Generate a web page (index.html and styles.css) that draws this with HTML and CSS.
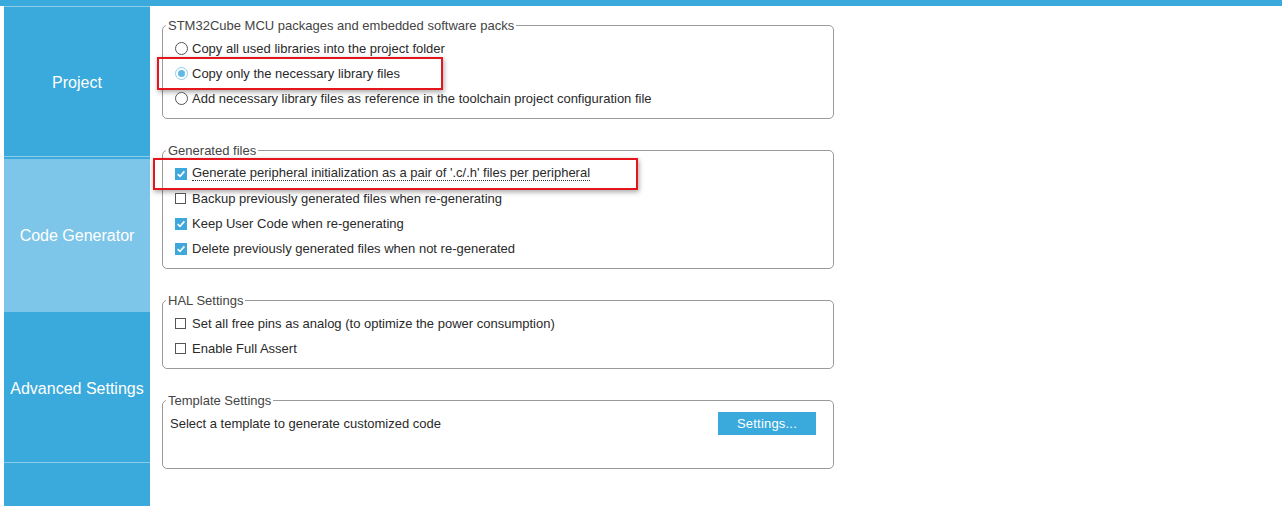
FILE: index.html
```html
<!DOCTYPE html>
<html>
<head>
<meta charset="utf-8">
<link rel="stylesheet" href="styles.css">
</head>
<body>
<div class="topbar"></div>
<div class="app">
  <nav class="sidebar">
    <div class="nav-item nav-project">Project</div>
    <div class="nav-item nav-code active">Code Generator</div>
    <div class="nav-item nav-adv">Advanced Settings</div>
    <div class="nav-rest"></div>
  </nav>
  <main class="main">
    <fieldset class="group">
      <legend>STM32Cube MCU packages and embedded software packs</legend>
      <div class="row"><span class="radio"></span><span class="label">Copy all used libraries into the project folder</span></div>
      <div class="row"><span class="mark mark-1"></span><span class="radio on"></span><span class="label">Copy only the necessary library files</span></div>
      <div class="row"><span class="radio"></span><span class="label">Add necessary library files as reference in the toolchain project configuration file</span></div>
    </fieldset>
    <fieldset class="group">
      <legend>Generated files</legend>
      <div class="row"><span class="mark mark-2"></span><span class="check on"><svg viewBox="0 0 12 12" width="12" height="12"><path d="M2.6 6.2 L5 8.4 L9.4 3.4" fill="none" stroke="#fff" stroke-width="1.6"/></svg></span><span class="label cb focus">Generate peripheral initialization as a pair of '.c/.h' files per peripheral</span></div>
      <div class="row"><span class="check"></span><span class="label cb">Backup previously generated files when re-generating</span></div>
      <div class="row"><span class="check on"><svg viewBox="0 0 12 12" width="12" height="12"><path d="M2.6 6.2 L5 8.4 L9.4 3.4" fill="none" stroke="#fff" stroke-width="1.6"/></svg></span><span class="label cb">Keep User Code when re-generating</span></div>
      <div class="row"><span class="check on"><svg viewBox="0 0 12 12" width="12" height="12"><path d="M2.6 6.2 L5 8.4 L9.4 3.4" fill="none" stroke="#fff" stroke-width="1.6"/></svg></span><span class="label cb">Delete previously generated files when not re-generated</span></div>
    </fieldset>
    <fieldset class="group">
      <legend>HAL Settings</legend>
      <div class="row"><span class="check"></span><span class="label cb">Set all free pins as analog (to optimize the power consumption)</span></div>
      <div class="row"><span class="check"></span><span class="label cb">Enable Full Assert</span></div>
    </fieldset>
    <fieldset class="group group-template">
      <legend>Template Settings</legend>
      <div class="row row-template"><span class="label">Select a template to generate customized code</span><button class="btn">Settings...</button></div>
    </fieldset>
  </main>
</div>
</body>
</html>
```
FILE: styles.css
```css
html, body {
  margin: 0;
  padding: 0;
  background: #ffffff;
  font-family: "Liberation Sans", Arial, sans-serif;
}

.topbar {
  height: 6px;
  background: #3aa9db;
}

.app {
  display: flex;
  height: 500px;
}

.sidebar {
  width: 146px;
  margin-left: 4px;
  display: flex;
  flex-direction: column;
  background: #3aa9db;
  border-top: 1px solid #8ccbea;
  box-sizing: border-box;
}

.nav-item {
  display: flex;
  align-items: center;
  justify-content: center;
  color: #ffffff;
  font-size: 16px;
  white-space: nowrap;
  box-sizing: border-box;
}

.nav-project {
  height: 150px;
  padding-top: 2px;
  border-bottom: 1px solid #8ccbea;
}

.nav-code {
  margin-top: 2px;
  height: 153px;
  background: #7ec6e9;
}

.nav-adv {
  height: 151px;
  padding-top: 4px;
  border-bottom: 1px solid #8ccbea;
}

.nav-rest {
  flex: 1;
}

.main {
  display: flex;
  flex-direction: column;
  gap: 23px;
  padding-left: 12px;
  padding-top: 11px;
}

.group {
  margin: 0;
  width: 672px;
  box-sizing: border-box;
  border: 1px solid #9a9a9a;
  border-radius: 5px;
  padding: 3px 0 7px 0;
  min-inline-size: 0;
}

.group legend {
  margin-left: 3px;
  padding: 0 2px;
  font-size: 13px;
  line-height: 16px;
  color: #444444;
  position: relative;
  top: 1px;
}

.row {
  position: relative;
  height: 25px;
  display: flex;
  align-items: center;
  padding-left: 12px;
  font-size: 13px;
  color: #2a2a2a;
}

.label {
  white-space: nowrap;
  position: relative;
}

.radio {
  width: 13px;
  height: 13px;
  box-sizing: border-box;
  border: 1px solid #555555;
  border-radius: 50%;
  background: #ffffff;
  margin-right: 4px;
  display: flex;
  align-items: center;
  justify-content: center;
  flex: none;
}

.radio.on {
  border-color: #8fcdec;
}

.radio.on::after {
  content: "";
  width: 7px;
  height: 7px;
  border-radius: 50%;
  background: #62b9e4;
}

.check {
  width: 11px;
  height: 11px;
  box-sizing: border-box;
  border: 1px solid #555555;
  background: #ffffff;
  margin-right: 6px;
  display: flex;
  align-items: center;
  justify-content: center;
  flex: none;
}

.check.on {
  width: 12px;
  height: 12px;
  border: none;
  background: #3ea8dc;
  margin-right: 5px;
}

.check svg {
  display: block;
}

.focus {
  border-bottom: 1px dotted #333333;
  line-height: 14px;
}

.mark {
  position: absolute;
  border: 2px solid #e4151c;
  box-shadow: 1px 2px 5px rgba(0, 0, 0, 0.35);
  box-sizing: border-box;
  pointer-events: none;
}

.mark-1 {
  left: -6px;
  top: -4px;
  width: 286px;
  height: 33px;
}

.mark-2 {
  left: -10px;
  top: -3px;
  width: 485px;
  height: 32px;
}

.group-template {
  padding-bottom: 32px;
}

.row-template {
  padding-left: 7px;
  padding-right: 17px;
  justify-content: space-between;
}

.btn {
  width: 98px;
  height: 23px;
  border: none;
  background: #3aa9db;
  color: #ffffff;
  font-family: "Liberation Sans", Arial, sans-serif;
  font-size: 13px;
  letter-spacing: 0.2px;
  padding: 0;
  margin-top: -1px;
}
```
